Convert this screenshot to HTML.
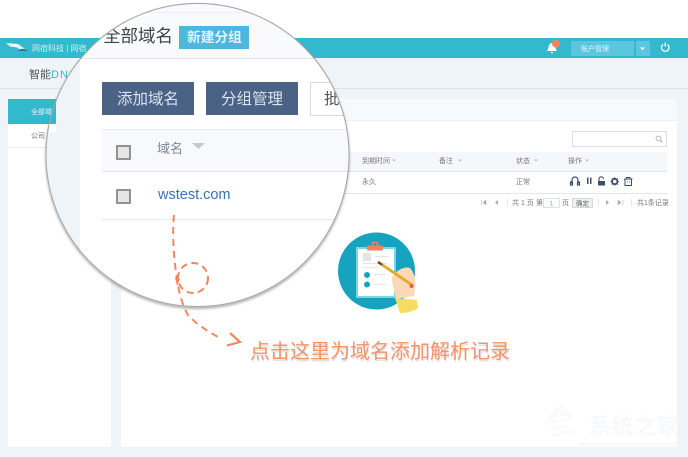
<!DOCTYPE html>
<html lang="zh">
<head>
<meta charset="utf-8">
<title>智能DNS</title>
<style>
html,body{margin:0;padding:0;background:#fff;width:688px;height:457px;overflow:hidden}
svg{display:block}
text{font-family:"Liberation Sans","Noto Sans CJK SC",sans-serif}
.s{font-size:7px;fill:#777}
.b{filter:url(#b)}
</style>
</head>
<body>
<svg width="688" height="457" viewBox="0 0 688 457" xmlns="http://www.w3.org/2000/svg">
<defs>
<filter id="b" x="-5%" y="-20%" width="110%" height="140%"><feGaussianBlur stdDeviation="0.35"/></filter>
<filter id="m" x="-5%" y="-5%" width="110%" height="110%"><feGaussianBlur stdDeviation="0.3"/></filter>
<filter id="sh" x="-10%" y="-10%" width="120%" height="120%"><feDropShadow dx="0" dy="2" stdDeviation="1.2" flood-color="#000" flood-opacity=".3"/></filter>
<clipPath id="c"><circle cx="197.500" cy="155" r="151"/></clipPath>
</defs>

<!-- page -->
<rect width="688" height="38" fill="#fff"/>
<rect y="38" width="688" height="419" fill="#eff4f8"/>
<rect y="38" width="688" height="20" fill="#33b9cd"/>
<rect y="88" width="688" height="1" fill="#dfe3e7"/>

<!-- header -->
<g class="b">
<path d="M6 43 L18 44 L28 51 L22 51 L17 47.500 L10 46.500Z" fill="#eaf7fa"/>
<path d="M18 51 C20 48 25 48 28 51Z" fill="#1d7f92"/>
<text x="32" y="51" style="font-size:8px" fill="#cfeef3">网宿科技 | 网宿</text>
<text x="29" y="78" style="font-size:11px" fill="#555">智能<tspan fill="#33b9cd" letter-spacing="1">DNS</tspan></text>
<rect x="571" y="41" width="63" height="15" fill="#5cc6de"/>
<rect x="636" y="41" width="14" height="15" fill="#5cc6de"/>
<text x="581" y="51" style="font-size:7px" fill="#e6f7fa">账户管理</text>
<path d="M640 47.500h5l-2.500 2.500z" fill="#fff"/>
<path d="M547 51 C549 49 548 43 552 43 C556 43 555 49 557 51Z M550.500 52h3l-1.500 1.500z" fill="#fff"/>
<circle cx="556" cy="43.500" r="4" fill="#f0845c"/>
<path d="M663 44.500 A3.800 3.800 0 1 0 667.500 44.500 M665.200 42.500v4" stroke="#fff" stroke-width="1.300" fill="none"/>
</g>

<!-- sidebar -->
<rect x="8" y="99" width="103" height="348" fill="#fff"/>
<rect x="8" y="99" width="103" height="25" fill="#33b9cd"/>
<rect x="8" y="147" width="103" height="1" fill="#e8ecef"/>
<text x="31" y="114" class="b" style="font-size:7px" fill="#e6f7fa">全部域名</text>
<text x="31" y="138" class="s b">公司</text>

<!-- main panel -->
<rect x="121" y="99" width="556" height="348" fill="#fff"/>
<rect x="121" y="99" width="556" height="21" fill="#f7fafd"/>
<rect x="121" y="120" width="556" height="1" fill="#eef1f4"/>
<rect x="572.500" y="131.500" width="94" height="15" fill="#fff" stroke="#dcdfe2"/>
<circle cx="658.500" cy="138.500" r="2.500" fill="none" stroke="#aaa" stroke-width=".8"/>
<path d="M660.500 140.500l2 2" stroke="#aaa"/>
<rect x="121" y="152" width="546" height="19" fill="#f5f8fb"/>
<rect x="121" y="171" width="546" height="1" fill="#e3e7ea"/>
<rect x="121" y="193" width="546" height="1" fill="#e3e7ea"/>
<g class="b">
<text x="362" y="163" class="s">到期时间</text><path d="M392 159.500h4l-2 2z" fill="#bbb"/>
<text x="439" y="163" class="s">备注</text><path d="M458 159.500h4l-2 2z" fill="#bbb"/>
<text x="516" y="163" class="s">状态</text><path d="M534 159.500h4l-2 2z" fill="#bbb"/>
<text x="568" y="163" class="s">操作</text><path d="M585 159.500h4l-2 2z" fill="#bbb"/>
<text x="362" y="184" class="s">永久</text>
<text x="516" y="184" class="s">正常</text>
<path d="M572 184v-4a3 3 0 0 1 6 0v4M570.500 182h2v3h-2zM577.500 182h2v3h-2z" fill="none" stroke="#3c4e6a" stroke-width="1.200"/>
<path d="M587 177.500h1.500v6.500h-1.500zM590 177.500h1.500v6.500h-1.500z" fill="#3c4e6a"/>
<path d="M599 181v-2a2.200 2.200 0 0 1 4.400 0" fill="none" stroke="#3c4e6a" stroke-width="1.100"/>
<rect x="598" y="181" width="7" height="4.500" fill="#3c4e6a"/>
<circle cx="614.700" cy="181.500" r="2.700" fill="none" stroke="#3c4e6a" stroke-width="1.800"/>
<path d="M614.700 177.200v1M614.700 184.800v1M610.500 181.500h1M618 181.500h1M611.700 178.500l.8.8M617 183.800l.8.8M617.800 178.500l-.8.8M612.500 183.800l-.8.8" stroke="#3c4e6a"/>
<rect x="625" y="179" width="6.500" height="6.500" fill="none" stroke="#3c4e6a"/>
<path d="M624 179h8.500M626.500 179v-1.500h3.500v1.500" stroke="#3c4e6a" fill="none"/>
<path d="M627 182h.8M629 182h.8" stroke="#3c4e6a"/>
<!-- pager -->
<path d="M481.500 200v5M486 200l-3 2.500l3 2.500z" fill="#aaa" stroke="#aaa" stroke-width=".5"/>
<path d="M498 200l-3 2.500l3 2.500z" fill="#aaa"/>
<rect x="507" y="199" width=".7" height="7" fill="#ddd"/>
<text x="512" y="205" class="s">共 1 页</text>
<text x="536" y="205" class="s">第</text>
<rect x="543.500" y="198.500" width="16" height="9" fill="#fff" stroke="#dde2e6"/>
<text x="550" y="205.500" style="font-size:6px" fill="#33b9cd">1</text>
<text x="562" y="205" class="s">页</text>
<rect x="572.500" y="198.500" width="20" height="9" fill="#eef0f2" stroke="#d5d8db"/>
<text x="576" y="205.500" style="font-size:6.500px" fill="#666">确定</text>
<rect x="598" y="199" width=".7" height="7" fill="#ddd"/>
<path d="M606 200l3 2.500l-3 2.500z" fill="#aaa"/>
<path d="M618 200l3 2.500l-3 2.500zM623 200v5" fill="#aaa" stroke="#aaa" stroke-width=".5"/>
<rect x="631" y="199" width=".7" height="7" fill="#ddd"/>
<text x="637" y="205" class="s">共1条记录</text>
</g>

<!-- illustration -->
<g filter="url(#m)">
<circle cx="376.500" cy="271" r="38.500" fill="#18a3bf"/>
<rect x="356" y="247" width="40" height="51" fill="#7fd3e3"/>
<rect x="358" y="249" width="36" height="47" fill="#fff"/>
<rect x="367" y="245.500" width="16" height="5" rx="1" fill="#f2805c"/>
<rect x="372.500" y="242.500" width="5" height="4" rx="1" fill="none" stroke="#f2805c" stroke-width="1.600"/>
<rect x="363" y="253" width="8" height="8" fill="#e2e6ea"/>
<rect x="375" y="256" width="14" height="1" fill="#e2e6ea"/>
<rect x="362" y="263" width="25" height="1" fill="#e2e6ea"/>
<rect x="362" y="267" width="16" height="1" fill="#e2e6ea"/>
<circle cx="367" cy="275" r="3" fill="#18a3bf"/>
<circle cx="367" cy="284.500" r="3" fill="#18a3bf"/>
<rect x="374" y="274" width="12" height="1" fill="#e2e6ea"/>
<rect x="374" y="284" width="12" height="1" fill="#e2e6ea"/>
<path d="M392 277 C396 270 405 266 410 268 C414 272 416 280 415 288 L414 296 L396 299 C394 290 392 284 392 277Z" fill="#fbd8b6"/>
<path d="M395 298 L417 300 L418 308 C413 312 405 313 400 313Z" fill="#f7dc62"/>
<path d="M378 262 L412 285" stroke="#e8a72c" stroke-width="2.800"/>
<path d="M378 262 L382 264.700" stroke="#444" stroke-width="2"/>
<circle cx="411.500" cy="286" r="2" fill="#d9653f"/>
</g>

<!-- magnifier -->
<circle cx="197.500" cy="155" r="151" fill="#fff" stroke="#a8a8a8" stroke-width="2.200" filter="url(#sh)"/>
<g clip-path="url(#c)">
<g filter="url(#m)">
<rect x="40" y="0" width="320" height="310" fill="#fff"/>
<rect x="40" y="0" width="320" height="58" fill="#f8fafc"/>
<rect x="40" y="58" width="320" height="1" fill="#dfe3e8"/>
<rect x="40" y="0" width="40" height="310" fill="#eff4f8"/>
<rect x="80" y="12" width="280" height="1" fill="#eceff3"/>
<rect x="40" y="124" width="16" height="8" fill="#fff"/>
<rect x="40" y="99" width="16" height="25" fill="#33b9cd"/>
<rect x="102" y="82" width="92" height="33" fill="#4a6286"/>
<text x="117" y="104" style="font-size:15.500px" fill="#dbe3ec">添加域名</text>
<rect x="206" y="82" width="92" height="33" fill="#4a6286"/>
<text x="221" y="104" style="font-size:15.500px" fill="#dbe3ec">分组管理</text>
<rect x="310.500" y="82.500" width="60" height="33" fill="#fff" stroke="#d7dadd"/>
<text x="324" y="104" style="font-size:15.500px" fill="#555">批量</text>
<rect x="102" y="130" width="260" height="41" fill="#f7f9fc"/>
<rect x="102" y="129" width="260" height="1" fill="#e5e8ec"/>
<rect x="102" y="171" width="260" height="1" fill="#dfe2e6"/>
<rect x="102" y="219" width="260" height="1" fill="#e5e8ec"/>
<rect x="117" y="146" width="13" height="13" fill="#e6e6e6" stroke="#888" stroke-width="1.800"/>
<rect x="117" y="190" width="13" height="13" fill="#e6e6e6" stroke="#888" stroke-width="1.800"/>
<text x="157" y="153" style="font-size:13px" fill="#7c8794">域名</text>
<path d="M192 143h13l-6.500 6z" fill="#c4c9cf"/>
<text x="158" y="199" style="font-size:14.500px" fill="#3a70b2">wstest.com</text>
<text x="103" y="42" style="font-size:17.500px" fill="#444">全部域名</text>
<rect x="179" y="26" width="70" height="23" fill="#4fb6de"/>
<text x="187" y="42" style="font-size:13.700px;font-weight:bold" fill="#e0f3fa">新建分组</text>
</g>
</g>

<!-- dashed annotation -->
<g fill="none" stroke="#f2875f" stroke-width="2" filter="url(#m)">
<path d="M174 215 C172 235 174 262 177 278 C179 296 184 308 188 315 C195 323 208 332 222 339" stroke-dasharray="7 5"/>
<circle cx="193" cy="278" r="15" stroke-dasharray="7 4.500"/>
<path d="M230 333 L240 342 L227 345.500" stroke-width="2.200"/>
</g>
<path d="M175 277l2 9l3-7z" fill="#f2875f"/>

<text x="250" y="358" style="font-size:20px" fill="#e6e1dd" transform="translate(0.500 2)">点击这里为域名添加解析记录</text>
<text x="250" y="358" style="font-size:20px" fill="#f2936c">点击这里为域名添加解析记录</text>

<!-- watermark -->
<g class="b">
<path d="M544 424 L560 406 L572 418 L558 412 L550 422 L566 420 M548 430 L568 426 M552 436 L572 431" fill="none" stroke="#f7f9fb" stroke-width="2"/>
<text x="589" y="434" style="font-size:22px;font-weight:bold;letter-spacing:.5px" fill="#f6f8fa">系统之家</text>
<rect x="580" y="442" width="97" height="4" fill="#f8f9fb"/>
</g>
</svg>
</body>
</html>
